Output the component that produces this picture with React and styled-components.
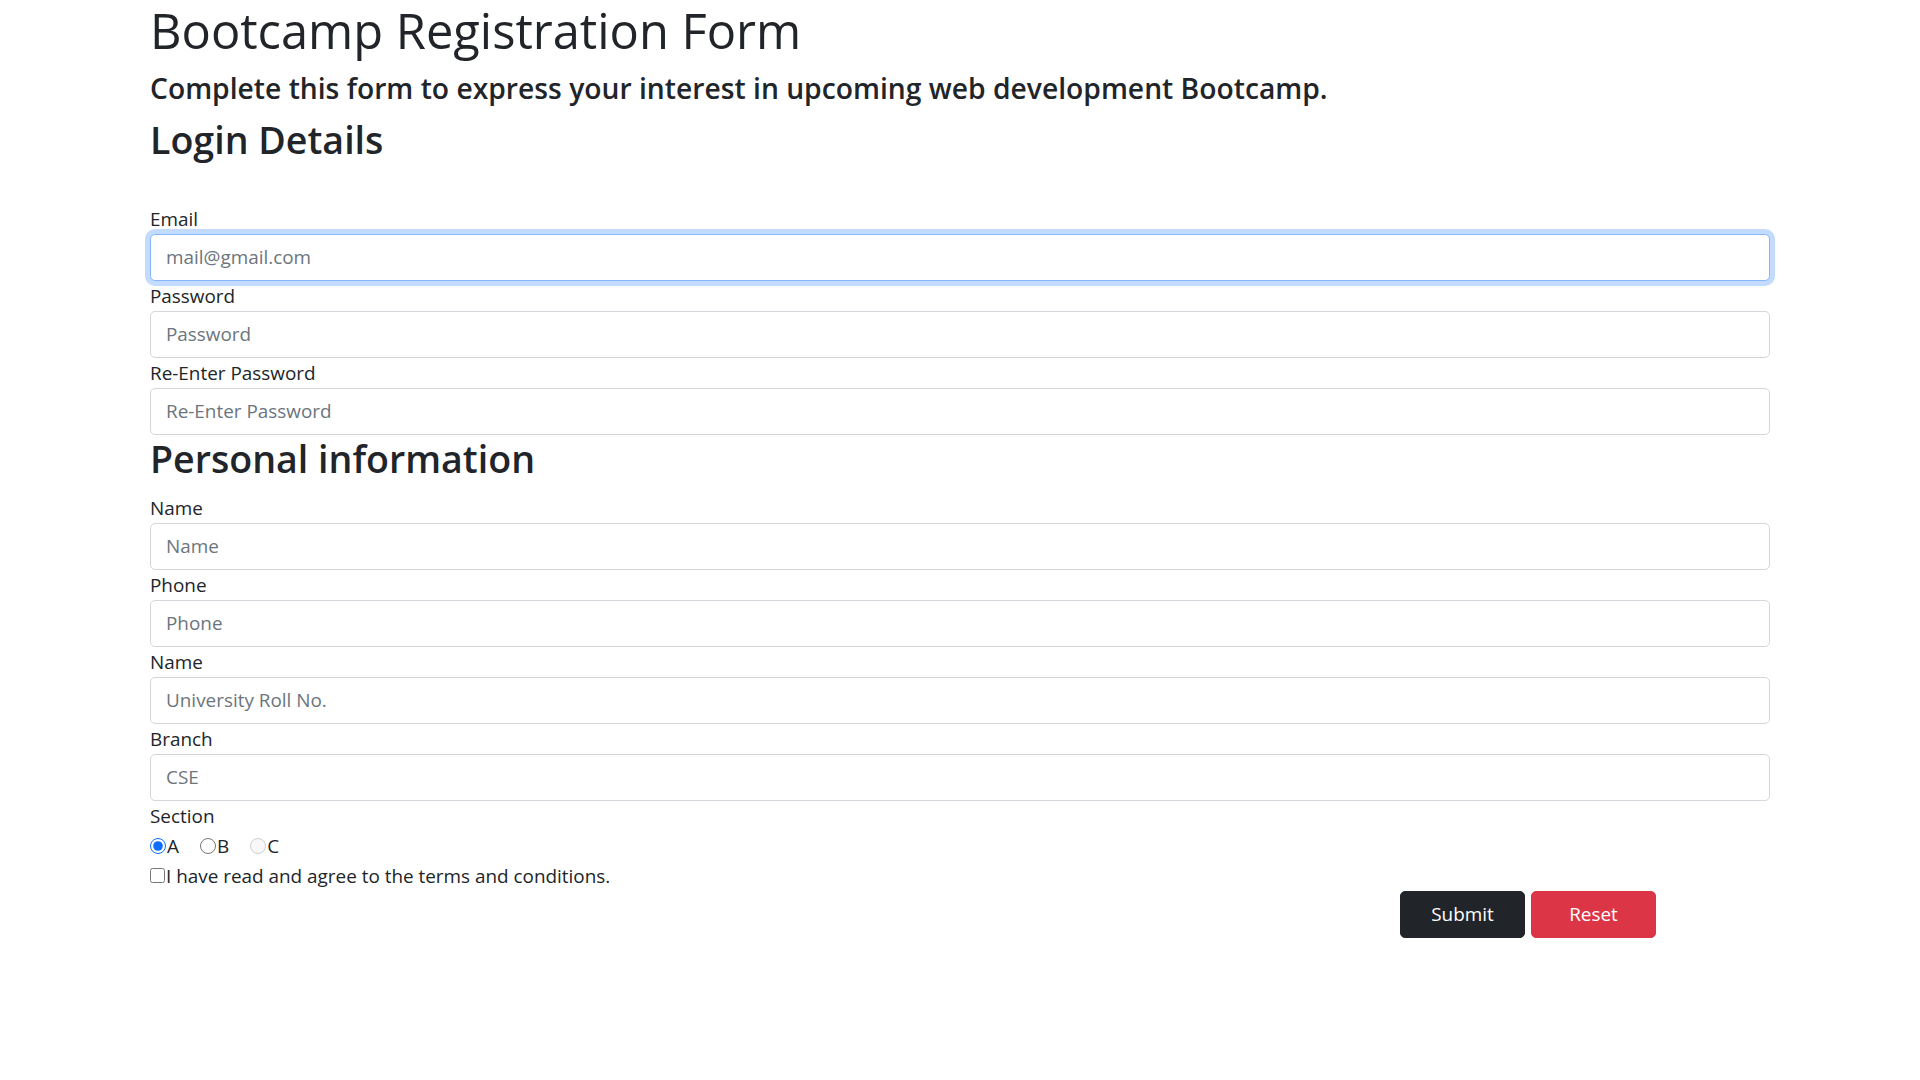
import React from "react";
import styled, { createGlobalStyle } from "styled-components";

const GlobalStyle = createGlobalStyle`
  *, *::before, *::after { box-sizing: border-box; }
  html, body { margin: 0; padding: 0; background: #fff; }
  body {
    font-family: "Open Sans", "Noto Sans", sans-serif;
    font-size: 18.9px;
    line-height: 30px;
    color: #212529;
  }
`;

const Container = styled.div`
  max-width: 1650px;
  margin: 0 auto;
  padding: 0 15px;
`;

const Title = styled.h1`
  margin: 0 0 10px;
  font-size: 48.8px;
  font-weight: 500;
  line-height: 60px;
`;

const Subtitle = styled.h4`
  margin: 0 0 10px;
  font-size: 28.25px;
  font-weight: 600;
  line-height: 36px;
`;

const SectionHeading = styled.h2`
  margin: 0 0 ${(p) => p.$after || 10}px;
  font-size: 37.6px;
  font-weight: 600;
  line-height: 48px;
`;

const Form = styled.form`
  display: flex;
  flex-direction: column;
`;

const Label = styled.label`
  display: block;
  line-height: 30px;
`;

const Input = styled.input`
  display: block;
  width: 100%;
  height: 47px;
  padding: 7.5px 15px;
  font-family: inherit;
  font-size: 18.9px;
  line-height: 30px;
  color: #212529;
  background: #fff;
  border: 1px solid ${(p) => (p.$focused ? "#86b7fe" : "#d3d7db")};
  border-radius: 5px;
  box-shadow: ${(p) => (p.$focused ? "0 0 0 5px rgba(13,110,253,0.25)" : "none")};
  outline: none;
  caret-color: #212529;
  &::placeholder { color: #6c757d; opacity: 1; }
`;

const OptionRow = styled.div`
  display: flex;
  align-items: center;
  height: 30px;
  gap: ${(p) => p.$gap || 0}px;
`;

const Option = styled.label`
  display: flex;
  align-items: center;
  line-height: 30px;
`;

const Radio = styled.input.attrs({ type: "radio" })`
  width: 16px;
  height: 16px;
  margin: 0 1px 0 0;
  accent-color: #0d6efd;
`;

const Checkbox = styled.input.attrs({ type: "checkbox" })`
  width: 15px;
  height: 15px;
  margin: 0 1px 0 0;
`;

const Actions = styled.div`
  display: flex;
  justify-content: flex-end;
  gap: 6px;
  padding-right: 114px;
`;

const Button = styled.button`
  width: 125px;
  height: 47px;
  padding: 7.5px 15px;
  font-family: inherit;
  font-size: 18.9px;
  line-height: 30px;
  color: #fff;
  background: ${(p) => (p.$variant === "danger" ? "#dc3545" : "#212529")};
  border: 1px solid ${(p) => (p.$variant === "danger" ? "#dc3545" : "#212529")};
  border-radius: 5px;
  cursor: pointer;
`;

const Field = ({ label, placeholder, type = "text", focused }) => (
  <>
    <Label>{label}</Label>
    <Input type={type} placeholder={placeholder} $focused={focused} autoFocus={focused} />
  </>
);

export default function App() {
  return (
    <>
      <GlobalStyle />
      <Container>
        <Title>Bootcamp Registration Form</Title>
        <Subtitle>Complete this form to express your interest in upcoming web development Bootcamp.</Subtitle>
        <SectionHeading $after={39.5}>Login Details</SectionHeading>
        <Form onSubmit={(e) => e.preventDefault()}>
          <Field label="Email" placeholder="mail@gmail.com" type="email" focused />
          <Field label="Password" placeholder="Password" type="password" />
          <Field label="Re-Enter Password" placeholder="Re-Enter Password" type="password" />
          <SectionHeading>Personal information</SectionHeading>
          <Field label="Name" placeholder="Name" />
          <Field label="Phone" placeholder="Phone" />
          <Field label="Name" placeholder="University Roll No." />
          <Field label="Branch" placeholder="CSE" />
          <Label>Section</Label>
          <OptionRow $gap={21}>
            <Option><Radio name="section" defaultChecked />A</Option>
            <Option><Radio name="section" />B</Option>
            <Option><Radio name="section" disabled />C</Option>
          </OptionRow>
          <OptionRow>
            <Option><Checkbox />I have read and agree to the terms and conditions.</Option>
          </OptionRow>
          <Actions>
            <Button type="submit">Submit</Button>
            <Button type="reset" $variant="danger">Reset</Button>
          </Actions>
        </Form>
      </Container>
    </>
  );
}
